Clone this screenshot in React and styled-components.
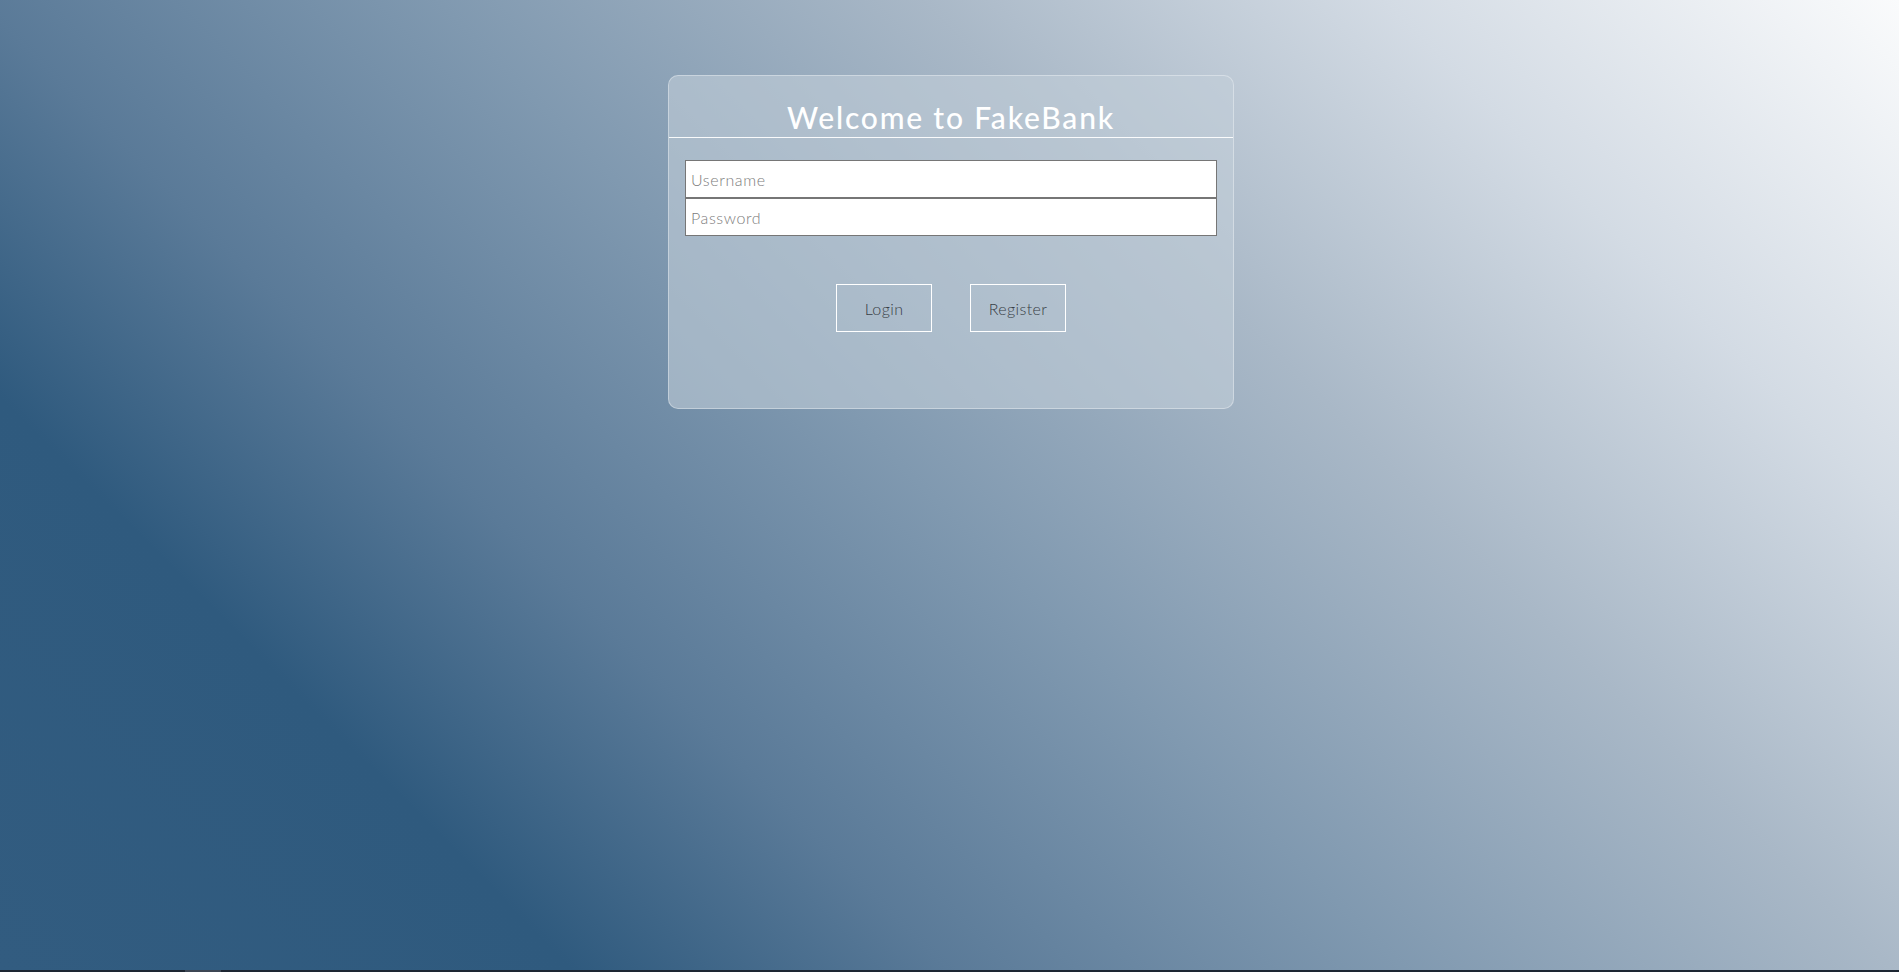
import React from "react";
import styled, { createGlobalStyle } from "styled-components";

const GlobalStyle = createGlobalStyle`
  html, body {
    margin: 0;
    padding: 0;
  }
  body {
    font-family: "Lato", "Liberation Sans", sans-serif;
    background: #1d2632;
  }
  * { box-sizing: border-box; }
`;

const Page = styled.div`
  min-height: 970px;
  padding: 75px 0 0 3px;
  display: flex;
  flex-direction: column;
  align-items: center;
  background: linear-gradient(
    45deg,
    #325c80 0%,
    #2f5a7e 20%,
    #5a7a98 33%,
    #8099b0 49%,
    #a9b8c7 66%,
    #d3dbe4 82%,
    #fafbfc 100%
  );
`;

const Card = styled.div`
  width: 566px;
  border: 1px solid rgba(255, 255, 255, 0.35);
  border-radius: 10px;
  background: rgba(195, 207, 217, 0.58);
  padding-bottom: 76px;
  display: flex;
  flex-direction: column;
`;

const Header = styled.div`
  padding: 23px 0 2px;
  border-bottom: 1px solid rgba(255, 255, 255, 0.92);
  text-align: center;
`;

const Title = styled.h1`
  margin: 0;
  font-family: "Lato", "Liberation Sans", sans-serif;
  font-weight: 500;
  font-size: 30px;
  line-height: 36px;
  letter-spacing: 1.8px;
  color: #ffffff;
`;

const Form = styled.form`
  padding: 22px 16px 0;
  display: flex;
  flex-direction: column;
`;

const Field = styled.input`
  display: block;
  width: 100%;
  height: 38px;
  margin: 0;
  padding: 0 5px;
  border: 1px solid #767676;
  background: #ffffff;
  font-family: "Lato", "Liberation Sans", sans-serif;
  font-weight: 300;
  font-size: 16px;
  letter-spacing: 0.6px;
  color: #333;
  outline: none;
  &::placeholder {
    color: #7c7c7c;
  }
`;

const Actions = styled.div`
  margin-top: 48px;
  display: flex;
  justify-content: center;
  gap: 38px;
`;

const Button = styled.button`
  width: 96px;
  height: 48px;
  padding: 0;
  background: transparent;
  border: 1px solid #ffffff;
  font-family: "Lato", "Liberation Sans", sans-serif;
  font-weight: 300;
  font-size: 16px;
  letter-spacing: 0.4px;
  color: #383e45;
  cursor: pointer;
`;

const ScrollTrack = styled.div`
  height: 2px;
  background: #1d2632;
  display: flex;
`;

const ScrollThumb = styled.div`
  margin-left: 185px;
  width: 36px;
  background: #3c4653;
`;

export default function App() {
  return (
    <>
      <GlobalStyle />
      <Page>
        <Card>
          <Header>
            <Title>Welcome to FakeBank</Title>
          </Header>
          <Form onSubmit={(e) => e.preventDefault()}>
            <Field type="text" placeholder="Username" />
            <Field type="password" placeholder="Password" />
            <Actions>
              <Button type="submit">Login</Button>
              <Button type="button">Register</Button>
            </Actions>
          </Form>
        </Card>
      </Page>
      <ScrollTrack>
        <ScrollThumb />
      </ScrollTrack>
    </>
  );
}
